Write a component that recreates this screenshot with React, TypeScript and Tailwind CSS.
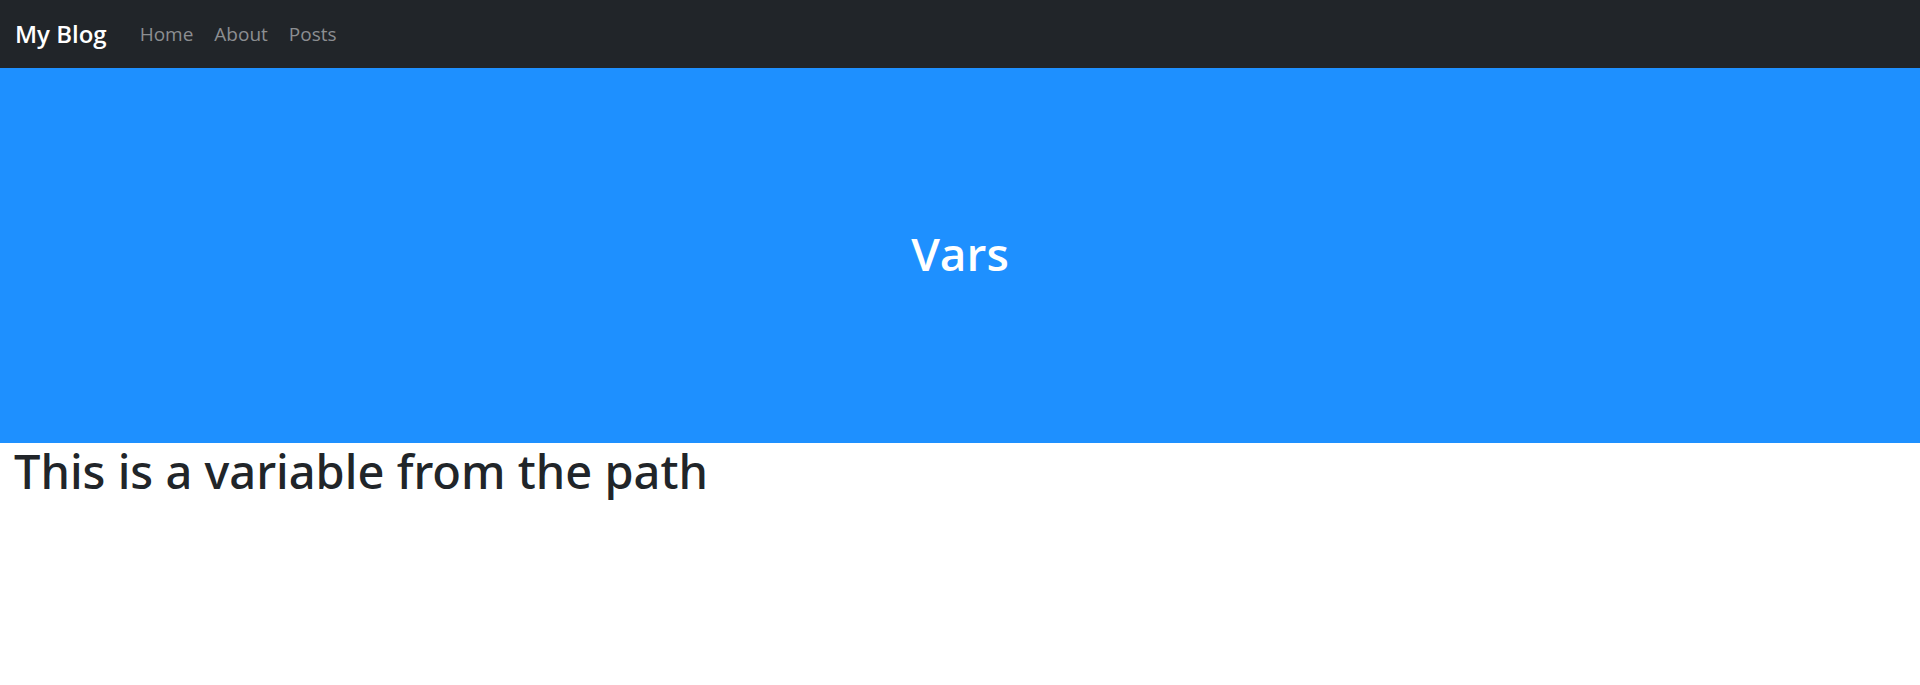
import React from "react";

export default function App() {
  return (
    <div className="min-h-[685px] bg-white" style={{ fontFamily: '"Open Sans", "Noto Sans", sans-serif' }}>
      <nav className="h-[68px] bg-[#212529] flex items-center px-[15px]">
        <span className="text-white text-[24px] font-semibold mr-[33px]">My Blog</span>
        <div className="flex gap-[21px] text-[19px] text-[#8c8e91]">
          <span>Home</span>
          <span>About</span>
          <span>Posts</span>
        </div>
      </nav>
      <div className="h-[375px] bg-[#1e90ff] flex items-center justify-center">
        <h1 className="text-white text-[46px] font-semibold pb-[4px]">Vars</h1>
      </div>
      <h1
        className="text-[#212529] text-[47px] font-medium leading-[1.2] px-[14px]"
        style={{ fontFamily: '"Noto Sans", "Open Sans", sans-serif' }}
      >
        This is a variable from the path
      </h1>
    </div>
  );
}
